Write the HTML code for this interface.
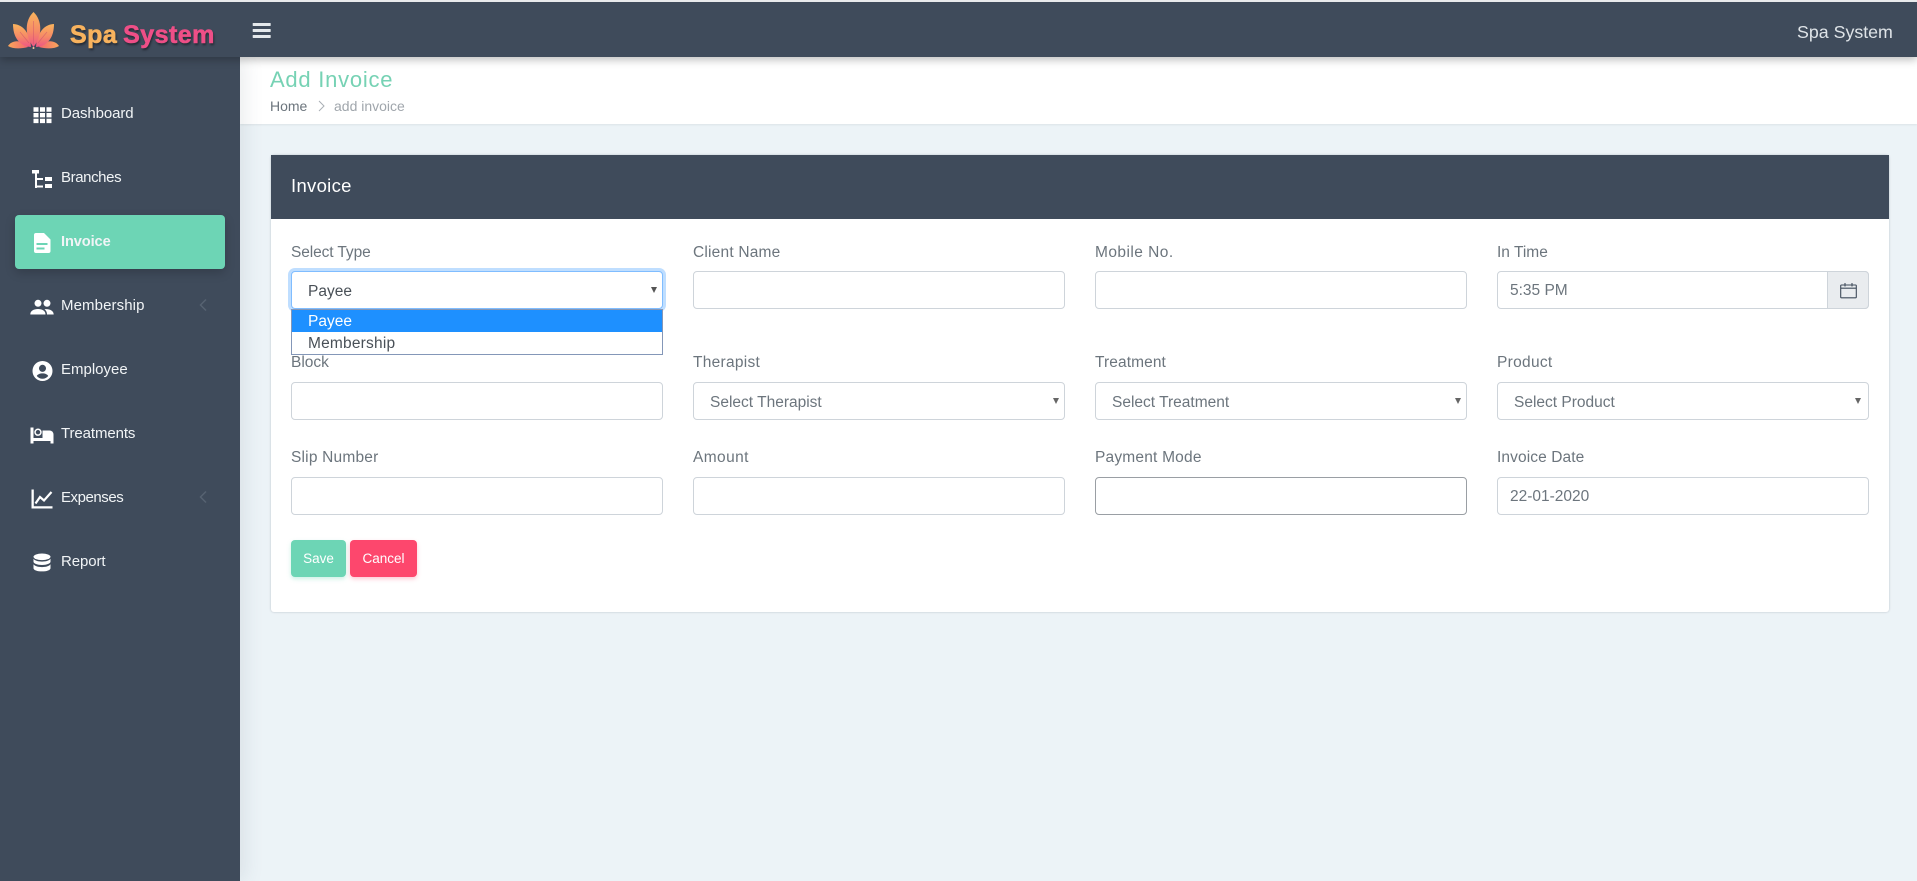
<!DOCTYPE html>
<html lang="en">
<head>
<meta charset="utf-8">
<title>Add Invoice</title>
<style>
*{box-sizing:border-box}
html,body{margin:0;padding:0}
body{width:1917px;height:881px;overflow:hidden;position:relative;background:#ecf3f7;font-family:"Liberation Sans",sans-serif;color:#6c757d}
.a{position:absolute;white-space:nowrap}
#top{left:0;top:2px;width:1917px;height:55px;background:#3f4b5b;box-shadow:0 3px 8px rgba(0,0,0,.25);z-index:5}
#strip{left:0;top:0;width:1917px;height:2px;background:#e8eaec;z-index:6}
#side{left:0;top:57px;width:240px;height:824px;background:#3f4b5b;z-index:3;box-shadow:5px 0 18px rgba(63,75,91,.1)}
#head{left:240px;top:57px;width:1677px;height:67px;background:#fff;box-shadow:0 1px 2px rgba(0,0,0,.07)}
.nav{left:61px;height:20px;line-height:20px;font-size:15px;color:#f1f4f6;z-index:4;letter-spacing:-.1px}
.ic{position:absolute;z-index:4;fill:#fff}
#active{left:15px;top:215px;width:210px;height:54px;border-radius:4px;background:#6dd5b5;box-shadow:0 4px 10px rgba(0,0,0,.18);z-index:4}
.chev{position:absolute;z-index:4;fill:none;stroke:#566271;stroke-width:1.5}
#card{left:271px;top:155px;width:1618px;height:457px;background:#fff;border-radius:3px;box-shadow:0 0 2px rgba(63,75,91,.3)}
#cardh{left:271px;top:155px;width:1618px;height:64px;background:#3f4b5b}
.lb{height:20px;line-height:20px;font-size:15.5px;color:#6c757d}
.in{height:38px;width:372px;background:#fff;border:1px solid #ced4da;border-radius:4px}
.tx{height:20px;line-height:20px;font-size:15.5px;color:#6c757d}
.car{position:absolute;width:0;height:0;border-left:3.5px solid transparent;border-right:3.5px solid transparent;border-top:6px solid #555}
.btn{top:540px;height:37px;line-height:37px;border-radius:4px;color:#fff;font-size:13.5px;text-align:center}
</style>
</head>
<body>
<div class="a" id="strip"></div>
<div class="a" id="top"></div>
<div class="a" id="side"></div>
<div class="a" id="head"></div>

<!-- logo -->
<svg class="a" style="left:6px;top:10px;z-index:7" width="56" height="40" viewBox="0 0 56 40">
<defs>
<linearGradient id="g" x1="0" y1="0" x2="0" y2="1"><stop offset="0" stop-color="#f9b45c"/><stop offset=".55" stop-color="#f68a66"/><stop offset="1" stop-color="#ee5585"/></linearGradient>
<linearGradient id="h" x1="0" y1="0" x2="1" y2="0"><stop offset="0" stop-color="#f9a75a"/><stop offset="1" stop-color="#f2666f"/></linearGradient>
<linearGradient id="i" x1="1" y1="0" x2="0" y2="0"><stop offset="0" stop-color="#f9a75a"/><stop offset="1" stop-color="#f2666f"/></linearGradient>
</defs>
<path d="M2 36C6 30 15 29 22 37C15 39 7 39 2 36Z" fill="url(#h)"/>
<path d="M53 36C49 30 40 29 33 37C40 39 48 39 53 36Z" fill="url(#i)"/>
<path d="M7 14C15 14 24 21 25 37C13 36 7 27 7 14Z" fill="url(#g)"/>
<path d="M48 14C40 14 31 21 30 37C42 36 48 27 48 14Z" fill="url(#g)"/>
<path d="M27.500 2C19 10 18 25 27.500 37C37 25 36 10 27.500 2Z" fill="url(#g)"/>
<path d="M27.500 11V34M14 22L23 33M41 22L32 33" stroke="#c9506e" stroke-width=".7" fill="none" opacity=".6"/>
<circle cx="27.500" cy="38" r="1" fill="#f8c9a0"/>
</svg>
<div class="a" style="left:70px;top:20px;height:30px;line-height:30px;font-size:25px;font-weight:bold;letter-spacing:.45px;word-spacing:-1.500px;-webkit-text-stroke:.6px;z-index:7;text-shadow:1px 2px 2px #20262f;color:#f8b35e">Spa <span style="color:#ee4f87">System</span></div>

<!-- hamburger -->
<svg class="a" style="left:252px;top:22px;z-index:7" width="19" height="16" viewBox="0 0 19 16" fill="#e4e8eb"><rect x=".7" y="1" width="18" height="3" rx=".6"/><rect x=".7" y="7" width="18" height="3" rx=".6"/><rect x=".7" y="13" width="18" height="3" rx=".6"/></svg>
<div class="a" style="left:1797px;top:21px;height:22px;line-height:22px;font-size:17.800px;color:#dfe4e8;z-index:7">Spa System</div>

<!-- sidebar -->
<div class="a" id="active"></div>
<svg class="ic" style="left:33px;top:106px" width="19" height="18" viewBox="0 0 19 18"><path d="M.5 1.300h5v4.400h-5zM7 1.300h5v4.400H7zM13.500 1.300h5v4.400h-5zM.5 7h5v4.400h-5zM7 7h5v4.400H7zM13.500 7h5v4.400h-5zM.5 12.700h5v4.400h-5zM7 12.700h5v4.400H7zM13.500 12.700h5v4.400h-5z"/></svg>
<div class="a nav" style="top:104px">Dashboard</div>

<svg class="ic" style="left:32px;top:170px" width="21" height="19" viewBox="0 0 21 19"><path d="M0 0h7v3.500H0zM3 3.500h2V18H3zM3 8h8v2H3zM3 15.500h8v2H3zM13 7h7v4h-7zM13 14h7v4h-7z"/></svg>
<div class="a nav" style="top:168px;letter-spacing:-.4px">Branches</div>

<svg class="ic" style="left:33px;top:233px" width="18" height="20" viewBox="0 0 18 20"><path d="M3 0h8l6.500 6.500V18a2 2 0 0 1-2 2H3a2 2 0 0 1-2-2V2a2 2 0 0 1 2-2z"/><path d="M3.500 10h11v2h-11zM3.500 14.500h8v2h-8z" fill="#6dd5b5"/></svg>
<div class="a nav" style="top:232px;font-weight:bold;font-size:14.600px">Invoice</div>

<svg class="ic" style="left:30px;top:299px" width="24" height="16" viewBox="0 0 24 16"><circle cx="8" cy="4.300" r="3.500"/><circle cx="17" cy="4.300" r="3.500"/><path d="M.300 15.500c0-3.800 3.500-5.500 7.700-5.500s7.500 1.700 7.500 5.500zM17 15.500c0-2-.7-3.900-2.500-5.200 4-.8 9.200.8 9.200 5.200z"/></svg>
<div class="a nav" style="top:296px;letter-spacing:.1px">Membership</div>
<svg class="chev" style="left:198px;top:297px" width="10" height="16" viewBox="0 0 10 16"><path d="M8 2.500L2.500 8 8 13.500"/></svg>

<svg class="ic" style="left:32px;top:361px" width="21" height="20" viewBox="0 0 22 21"><path fill-rule="evenodd" d="M11 0a10.500 10.500 0 1 1 0 21 10.500 10.500 0 0 1 0-21zM11 4a3.700 3.700 0 1 0 0 7.400A3.700 3.700 0 0 0 11 4zM11 13c-2.800 0-5.200 1-6 2.800 1.400 1.800 3.600 2.900 6 2.900s4.600-1.100 6-2.900c-.8-1.800-3.200-2.800-6-2.800z"/></svg>
<div class="a nav" style="top:360px;letter-spacing:0">Employee</div>

<svg class="ic" style="left:30px;top:427px" width="24" height="17" viewBox="0 0 24 17"><path d="M.500.500H3.500v10.500h20v5.500h-3v-2.500H3.500v2.500h-3z"/><path fill-rule="evenodd" d="M8 1.500a3.700 3.700 0 1 1 0 7.400 3.700 3.700 0 0 1 0-7.400zM8 3a2.200 2.200 0 1 0 0 4.400A2.200 2.200 0 0 0 8 3z"/><path d="M12.500 3.500h7a4 4 0 0 1 4 4v3.500h-11z"/></svg>
<div class="a nav" style="top:424px;letter-spacing:-.1px">Treatments</div>

<svg class="ic" style="left:31px;top:489px" width="22" height="20" viewBox="0 0 22 20"><path d="M.500.500h2.300v16.700h18.700v2.300H.500z"/><path d="M4.500 14.500l4.500-6.500 4 3.500L20.500 3" fill="none" stroke="#fff" stroke-width="2.200"/></svg>
<div class="a nav" style="top:488px;letter-spacing:-.45px">Expenses</div>
<svg class="chev" style="left:198px;top:489px" width="10" height="16" viewBox="0 0 10 16"><path d="M8 2.500L2.500 8 8 13.500"/></svg>

<svg class="ic" style="left:33px;top:553px" width="18" height="19" viewBox="0 0 18 19"><ellipse cx="9" cy="3.800" rx="8.500" ry="3.300"/><path d="M.500 5.800c1.500 2 4.500 2.800 8.500 2.800s7-.8 8.500-2.800v3c0 1.800-3.800 3.200-8.500 3.200S.500 10.600.500 8.800zM.500 11.300c1.500 2 4.500 2.800 8.500 2.800s7-.8 8.500-2.800v3.900c0 1.900-3.800 3.200-8.500 3.200S.500 17.100.500 15.200z"/></svg>
<div class="a nav" style="top:552px">Report</div>

<!-- header -->
<div class="a" style="left:270px;top:65px;height:28px;line-height:30px;font-size:22px;letter-spacing:.75px;color:#76d2b4">Add Invoice</div>
<div class="a" style="left:270px;top:97px;height:18px;line-height:18px;font-size:14px;color:#6c757d">Home</div>
<svg class="a" style="left:317px;top:100px" width="9" height="12" viewBox="0 0 9 12" fill="none" stroke="#a9afb5" stroke-width="1"><path d="M2 1l5 5-5 5"/></svg>
<div class="a" style="left:334px;top:97px;height:18px;line-height:18px;font-size:14px;color:#a0a6ac">add invoice</div>

<!-- card -->
<div class="a" id="card"></div>
<div class="a" id="cardh"></div>
<div class="a" style="left:291px;top:174px;height:24px;line-height:24px;font-size:18.500px;color:#fff;letter-spacing:.3px">Invoice</div>

<!-- row 1 -->
<div class="a lb" style="left:291px;top:243px;letter-spacing:-.1px">Select Type</div>
<div class="a lb" style="left:693px;top:243px;letter-spacing:.2px">Client Name</div>
<div class="a lb" style="left:1095px;top:243px;letter-spacing:.45px">Mobile No.</div>
<div class="a lb" style="left:1497px;top:243px">In Time</div>

<div class="a in" style="left:291px;top:271px;border-color:#80bdff;box-shadow:0 0 0 3px rgba(128,189,255,.5)"></div>
<div class="a tx" style="left:308px;top:282px;color:#495057">Payee</div>
<div class="car" style="left:651px;top:287px"></div>
<div class="a in" style="left:693px;top:271px"></div>
<div class="a in" style="left:1095px;top:271px"></div>
<div class="a in" style="left:1497px;top:271px"></div>
<div class="a" style="left:1827px;top:271px;width:42px;height:38px;background:#e9ecef;border:1px solid #ced4da;border-radius:0 4px 4px 0"></div>
<div class="a tx" style="left:1510px;top:281px">5:35 PM</div>
<svg class="a" style="left:1840px;top:282px" width="17" height="17" viewBox="0 0 17 17" fill="none" stroke="#3f4b5b" stroke-width="1.100"><rect x=".7" y="3" width="15.600" height="12.800" rx=".8"/><path d="M.7 6.200h15.600M5 1v3.500M12 1v3.500"/></svg>

<!-- dropdown -->
<div class="a" style="left:291px;top:309px;width:372px;height:46px;background:#fff;border:1px solid #8497b8;z-index:2"></div>
<div class="a" style="left:292px;top:310px;width:370px;height:22px;background:#1e90ff;z-index:2"></div>
<div class="a tx" style="left:308px;top:312px;color:#fff;z-index:2">Payee</div>
<div class="a tx" style="left:308px;top:334px;color:#495057;z-index:2;letter-spacing:.2px">Membership</div>

<!-- row 2 -->
<div class="a lb" style="left:291px;top:353px;z-index:1">Block</div>
<div class="a lb" style="left:693px;top:353px;letter-spacing:.27px">Therapist</div>
<div class="a lb" style="left:1095px;top:353px;letter-spacing:.1px">Treatment</div>
<div class="a lb" style="left:1497px;top:353px;letter-spacing:.3px">Product</div>

<div class="a in" style="left:291px;top:382px"></div>
<div class="a in" style="left:693px;top:382px"></div>
<div class="a tx" style="left:710px;top:393px">Select Therapist</div>
<div class="car" style="left:1053px;top:398px;border-top-color:#666"></div>
<div class="a in" style="left:1095px;top:382px"></div>
<div class="a tx" style="left:1112px;top:393px">Select Treatment</div>
<div class="car" style="left:1455px;top:398px;border-top-color:#666"></div>
<div class="a in" style="left:1497px;top:382px"></div>
<div class="a tx" style="left:1514px;top:393px">Select Product</div>
<div class="car" style="left:1855px;top:398px;border-top-color:#666"></div>

<!-- row 3 -->
<div class="a lb" style="left:291px;top:448px;letter-spacing:.2px">Slip Number</div>
<div class="a lb" style="left:693px;top:448px;letter-spacing:.4px">Amount</div>
<div class="a lb" style="left:1095px;top:448px;letter-spacing:.2px">Payment Mode</div>
<div class="a lb" style="left:1497px;top:448px;letter-spacing:.1px">Invoice Date</div>

<div class="a in" style="left:291px;top:477px"></div>
<div class="a in" style="left:693px;top:477px"></div>
<div class="a in" style="left:1095px;top:477px;border-color:#9a9fa4"></div>
<div class="a in" style="left:1497px;top:477px"></div>
<div class="a tx" style="left:1510px;top:487px">22-01-2020</div>

<!-- buttons -->
<div class="a btn" style="left:291px;width:55px;background:#6dd5b5;box-shadow:0 2px 4px rgba(109,213,181,.35)">Save</div>
<div class="a btn" style="left:350px;width:67px;background:#fd476d;box-shadow:0 2px 4px rgba(253,71,109,.3)">Cancel</div>
</body>
</html>
